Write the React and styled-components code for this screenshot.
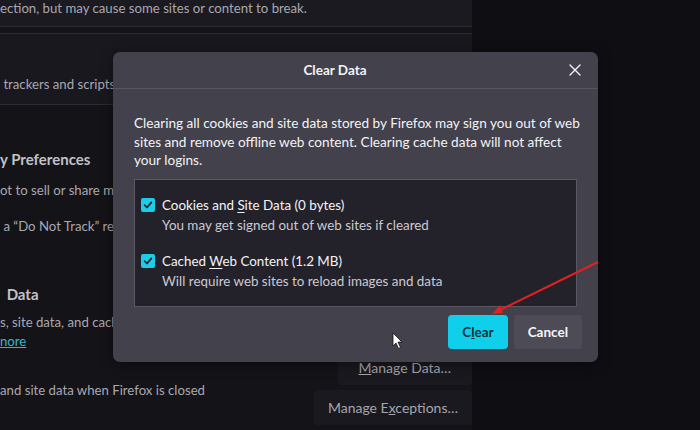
import React from "react";
import styled, { createGlobalStyle } from "styled-components";

const GlobalStyle = createGlobalStyle`
  html, body {
    margin: 0;
    padding: 0;
    background: #0f0e13;
  }
  body {
    font-family: Lato, "Open Sans", sans-serif;
  }
`;

const Screen = styled.div`
  position: relative;
  width: 700px;
  height: 430px;
  overflow: hidden;
  background: #0f0e13;
  display: flex;
`;

const Page = styled.div`
  width: 472px;
  flex-shrink: 0;
  background: #141318;
  display: flex;
  flex-direction: column;
  color: #a9a8b0;
  font-size: 13.2px;
  & > * {
    flex-shrink: 0;
  }
`;

const TopCard = styled.div`
  height: 27px;
  box-sizing: border-box;
  background: #1b1a20;
  border-bottom: 1px solid #2c2b32;
  line-height: 17px;
  white-space: nowrap;
`;

const Card = styled.div`
  margin-top: 6px;
  height: 72px;
  box-sizing: border-box;
  background: #19181e;
  border-top: 1px solid #2c2b32;
  border-bottom: 1px solid #2c2b32;
  padding-top: 41px;
  line-height: 18px;
  white-space: nowrap;
`;

const Heading = styled.div`
  margin-top: ${(p) => p.$top}px;
  padding-left: ${(p) => p.$indent || 0}px;
  font-size: 15px;
  font-weight: 700;
  line-height: 22px;
  color: #c2c1c8;
  white-space: nowrap;
`;

const Line = styled.div`
  margin-top: ${(p) => p.$top || 0}px;
  line-height: 18px;
  white-space: nowrap;
`;

const LearnMore = styled.span`
  color: #3fb3c4;
  text-decoration: underline;
`;

const DataRow = styled.div`
  display: flex;
  justify-content: space-between;
  align-items: flex-start;
`;

const TextCol = styled.div`
  display: flex;
  flex-direction: column;
`;

const ButtonCol = styled.div`
  display: flex;
  flex-direction: column;
  align-items: flex-end;
  gap: 5px;
  margin-top: ${(p) => p.$top}px;
`;

const PageButton = styled.div`
  height: 35px;
  box-sizing: border-box;
  padding: 0 ${(p) => p.$pad}px;
  display: flex;
  align-items: center;
  background: #1a191f;
  border-radius: 4px;
  color: #a6a5ad;
  font-size: 14px;
  white-space: nowrap;
  u {
    text-decoration-thickness: 1px;
  }
`;

const Overlay = styled.svg`
  position: absolute;
  left: 0;
  top: 0;
  pointer-events: none;
`;

const Dialog = styled.div`
  position: absolute;
  left: 113px;
  top: 52px;
  width: 485px;
  height: 310px;
  box-sizing: border-box;
  background: #42414c;
  border-radius: 7px;
  box-shadow: 0 2px 14px rgba(0, 0, 0, 0.45);
  display: flex;
  flex-direction: column;
  color: #f3f3f6;
`;

const DialogHeader = styled.div`
  height: 37px;
  box-sizing: border-box;
  border-bottom: 1px solid #57565f;
  display: flex;
  align-items: center;
`;

const DialogTitle = styled.div`
  flex: 1;
  text-align: center;
  font-size: 13.5px;
  font-weight: 700;
`;

const CloseButton = styled.div`
  width: 36px;
  height: 36px;
  display: flex;
  align-items: center;
  justify-content: center;
  margin-right: 5px;
`;

const DialogBody = styled.div`
  flex: 1;
  display: flex;
  flex-direction: column;
  padding: 25px 21px 13px 21px;
`;

const Intro = styled.p`
  margin: 0 -10px 0 0;
  font-size: 13.6px;
  line-height: 18.5px;
  color: #f3f3f6;
`;

const OptionBox = styled.div`
  margin-top: 9px;
  height: 128px;
  box-sizing: border-box;
  background: #23222a;
  border: 1px solid #5a5963;
  padding: 16px 6px 10px;
  display: flex;
  flex-direction: column;
  gap: 18px;
`;

const Option = styled.div`
  display: grid;
  grid-template-columns: 14px 1fr;
  column-gap: 7px;
  row-gap: 2px;
  align-items: center;
`;

const Check = styled.div`
  width: 14px;
  height: 14px;
  border-radius: 2px;
  background: #1bcde8;
  display: flex;
  align-items: center;
  justify-content: center;
`;

const OptionLabel = styled.div`
  font-size: 13.4px;
  line-height: 18px;
  color: #f3f3f6;
  u {
    text-underline-offset: 2px;
  }
`;

const OptionHint = styled.div`
  grid-column: 2;
  font-size: 13.4px;
  line-height: 18px;
  color: #cbcad2;
`;

const Footer = styled.div`
  margin-top: auto;
  display: flex;
  justify-content: flex-end;
  gap: 6px;
  margin-right: -5px;
`;

const DialogButton = styled.div`
  height: 34px;
  box-sizing: border-box;
  padding: 0 ${(p) => p.$pad}px;
  display: flex;
  align-items: center;
  border-radius: 4px;
  font-size: 13.5px;
  font-weight: 700;
  background: ${(p) => (p.$primary ? "#10cfea" : "#4c4b56")};
  color: ${(p) => (p.$primary ? "#14303a" : "#f6f6f8")};
  u {
    text-decoration-thickness: 1px;
  }
`;

function CheckMark() {
  return (
    <Check>
      <svg width="10" height="10" viewBox="0 0 10 10">
        <path d="M1.6 5.2 L4 7.5 L8.4 2.4" fill="none" stroke="#1d2430" strokeWidth="1.7" strokeLinecap="round" strokeLinejoin="round" />
      </svg>
    </Check>
  );
}

export default function App() {
  return (
    <>
      <GlobalStyle />
      <Screen>
        <Page>
          <TopCard>ection, but may cause some sites or content to break.</TopCard>
          <Card>&nbsp;trackers and scripts</Card>
          <Heading $top={43}>y Preferences</Heading>
          <Line $top={11}>ot to sell or share my data</Line>
          <Line $top={18}>&nbsp;a “Do Not Track” request</Line>
          <DataRow>
            <TextCol>
              <Heading $top={48} $indent={3}>&nbsp;Data</Heading>
              <Line $top={8}>s, site data, and cache</Line>
              <Line $top={1}>
                <LearnMore>nore</LearnMore>
              </Line>
              <Line $top={31}>and site data when Firefox is closed</Line>
            </TextCol>
            <ButtonCol $top={75}>
              <PageButton $pad={18}>Clear Data…</PageButton>
              <PageButton $pad={21}>
                <span>
                  <u>M</u>anage Data…
                </span>
              </PageButton>
              <PageButton $pad={14}>
                <span>
                  Manage E<u>x</u>ceptions…
                </span>
              </PageButton>
            </ButtonCol>
          </DataRow>
        </Page>

        <Dialog>
          <DialogHeader>
            <DialogTitle>Clear Data</DialogTitle>
            <CloseButton>
              <svg width="12" height="12" viewBox="0 0 12 12">
                <path d="M1 1 L11 11 M11 1 L1 11" stroke="#f3f3f6" strokeWidth="1.4" strokeLinecap="round" />
              </svg>
            </CloseButton>
          </DialogHeader>
          <DialogBody>
            <Intro>
              Clearing all cookies and site data stored by Firefox may sign you out of web sites and remove offline web
              content. Clearing cache data will not affect your logins.
            </Intro>
            <OptionBox>
              <Option>
                <CheckMark />
                <OptionLabel>
                  Cookies and <u>S</u>ite Data (0 bytes)
                </OptionLabel>
                <OptionHint>You may get signed out of web sites if cleared</OptionHint>
              </Option>
              <Option>
                <CheckMark />
                <OptionLabel>
                  Cached <u>W</u>eb Content (1.2 MB)
                </OptionLabel>
                <OptionHint>Will require web sites to reload images and data</OptionHint>
              </Option>
            </OptionBox>
            <Footer>
              <DialogButton $primary $pad={14}>
                <span>
                  C<u>l</u>ear
                </span>
              </DialogButton>
              <DialogButton $pad={14}>Cancel</DialogButton>
            </Footer>
          </DialogBody>
        </Dialog>

        <Overlay width="700" height="430" viewBox="0 0 700 430">
          <line x1="598" y1="262" x2="500" y2="310" stroke="#e3211f" strokeWidth="2" />
          <path d="M492 314 L500 305 L503 313 Z" fill="#e3211f" />
          <path
            d="M393 333 L393 346 L396 343 L398.5 348.5 L400.5 347.5 L398 342 L402 342 Z"
            fill="#ffffff"
            stroke="#111"
            strokeWidth="0.8"
          />
        </Overlay>
      </Screen>
    </>
  );
}
